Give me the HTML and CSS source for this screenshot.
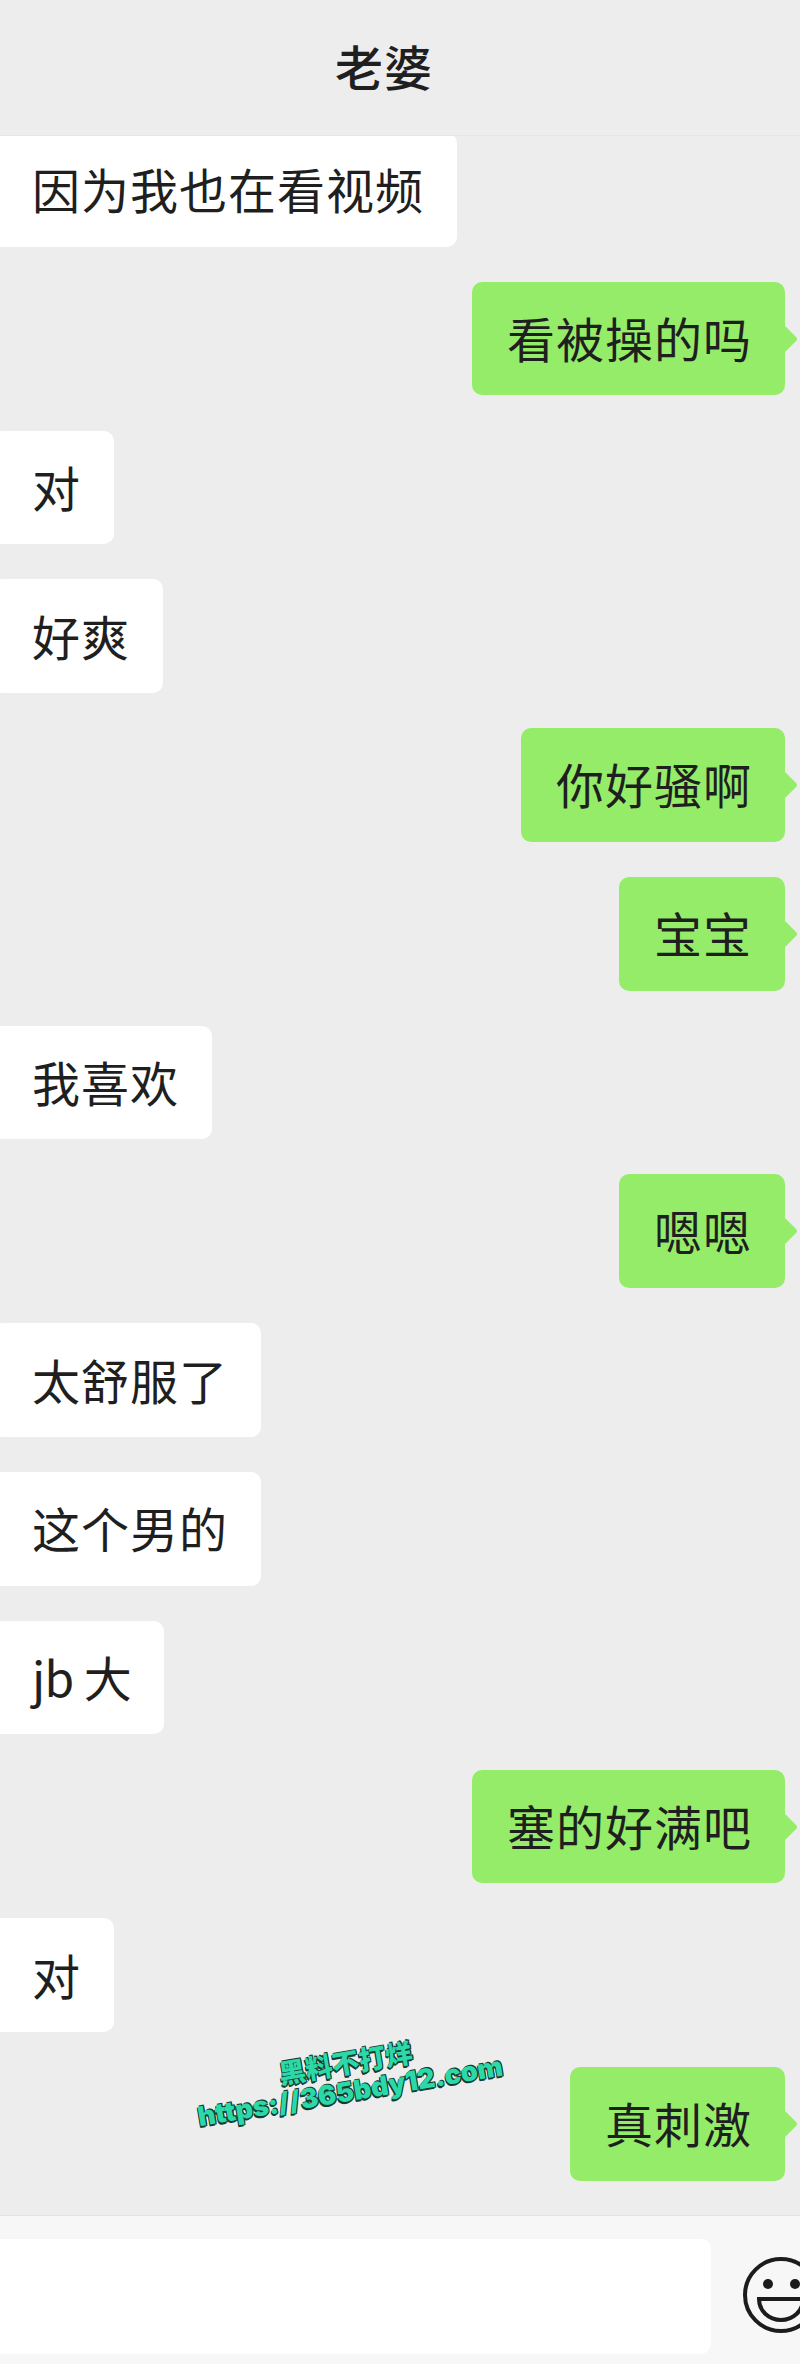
FILE: index.html
```html
<!DOCTYPE html>
<html lang="zh-CN">
<head>
    <meta charset="UTF-8">
    <meta name="viewport" content="width=device-width, initial-scale=1.0">
    <title>老婆</title>
    <link rel="stylesheet" href="styles.css">
</head>
<body>
    <div class="phone">
        <header class="top-bar">
            <h1 class="top-title">老婆</h1>
        </header>

        <main class="chat">
            <div class="bubble bubble-in">因为我也在看视频</div>
            <div class="bubble bubble-out">看被操的吗</div>
            <div class="bubble bubble-in">对</div>
            <div class="bubble bubble-in">好爽</div>
            <div class="bubble bubble-out">你好骚啊</div>
            <div class="bubble bubble-out">宝宝</div>
            <div class="bubble bubble-in">我喜欢</div>
            <div class="bubble bubble-out">嗯嗯</div>
            <div class="bubble bubble-in">太舒服了</div>
            <div class="bubble bubble-in">这个男的</div>
            <div class="bubble bubble-in bubble-latin">jb 大</div>
            <div class="bubble bubble-out">塞的好满吧</div>
            <div class="bubble bubble-in">对</div>
            <div class="bubble bubble-out">真刺激</div>
        </main>

        <div class="watermark">
            <span class="watermark-name">黑料不打烊</span>
            <span class="watermark-url">https://365bdy12.com</span>
        </div>

        <footer class="input-bar">
            <div class="input-box"></div>
            <svg class="emoji-icon" width="84" height="84" viewBox="0 0 84 84" fill="none" stroke="#1c1c1c" stroke-width="4">
                <circle cx="42" cy="42" r="36"/>
                <circle cx="29" cy="31" r="5" fill="#1c1c1c" stroke="none"/>
                <circle cx="56" cy="31" r="5" fill="#1c1c1c" stroke="none"/>
                <path d="M20 46 H64 C64 58 54 67 42 67 C30 67 20 58 20 46 Z"/>
            </svg>
        </footer>
    </div>
</body>
</html>
```

FILE: styles.css
```css
body {
    margin: 0;
    background-color: #ededed;
    font-family: "Noto Sans CJK SC", "Noto Sans", sans-serif;
    color: #1f1f1f;
}

.phone {
    position: relative;
    width: 800px;
    height: 2364px;
    display: flex;
    flex-direction: column;
    overflow: hidden;
}

.top-bar {
    height: 136px;
    flex: none;
    display: flex;
    align-items: center;
    justify-content: center;
    padding: 0 32px 5px 0;
    box-sizing: border-box;
    border-bottom: 1px solid #e6e6e6;
}

.top-title {
    margin: 0;
    font-size: 48px;
    font-weight: 500;
    line-height: 60px;
    letter-spacing: 1px;
}

.chat {
    flex: 1;
    min-height: 0;
    display: flex;
    flex-direction: column;
    align-items: flex-start;
    gap: 35.2px;
    overflow: hidden;
}

.bubble {
    position: relative;
    box-sizing: border-box;
    height: 113.6px;
    padding-bottom: 3px;
    display: flex;
    align-items: center;
    font-size: 48px;
    letter-spacing: 1px;
    border-radius: 10px;
    white-space: pre;
}

.bubble:first-child {
    margin-top: -3px;
}

.bubble-in {
    background-color: #ffffff;
    margin-left: -8px;
    padding-left: 40px;
    padding-right: 33px;
}

.bubble-latin {
    letter-spacing: -0.6px;
}

.bubble-out {
    background-color: #95ec69;
    align-self: flex-end;
    margin-right: 15px;
    padding-left: 35px;
    padding-right: 33px;
}

.bubble-out::after {
    content: "";
    position: absolute;
    right: -9px;
    top: 47px;
    width: 20px;
    height: 20px;
    background-color: #95ec69;
    border-radius: 3px;
    transform: rotate(45deg);
}

.input-bar {
    height: 149px;
    flex: none;
    box-sizing: border-box;
    padding: 23px 0 0 0;
    display: flex;
    align-items: flex-start;
    background-color: #f7f7f7;
    border-top: 1px solid #e4e4e4;
}

.input-box {
    width: 711px;
    height: 115px;
    flex: none;
    background-color: #ffffff;
    border-radius: 0 10px 10px 0;
}

.emoji-icon {
    flex: none;
    margin: 14px 0 0 28px;
}

.watermark {
    position: absolute;
    left: 188px;
    top: 2050px;
    width: 320px;
    display: flex;
    flex-direction: column;
    align-items: center;
    transform: rotate(-9.5deg);
    color: #2bd9a8;
    font-family: "Inter", "Noto Sans CJK SC", sans-serif;
    font-weight: 900;
    line-height: 1.05;
    text-shadow: -1px 1px 0 #123c32, 1px 1px 0 #123c32, -1px 2px 0 #123c32, 1px -1px 0 #123c32;
}

.watermark-name {
    font-size: 27px;
}

.watermark-url {
    font-size: 27px;
    white-space: nowrap;
}
```
